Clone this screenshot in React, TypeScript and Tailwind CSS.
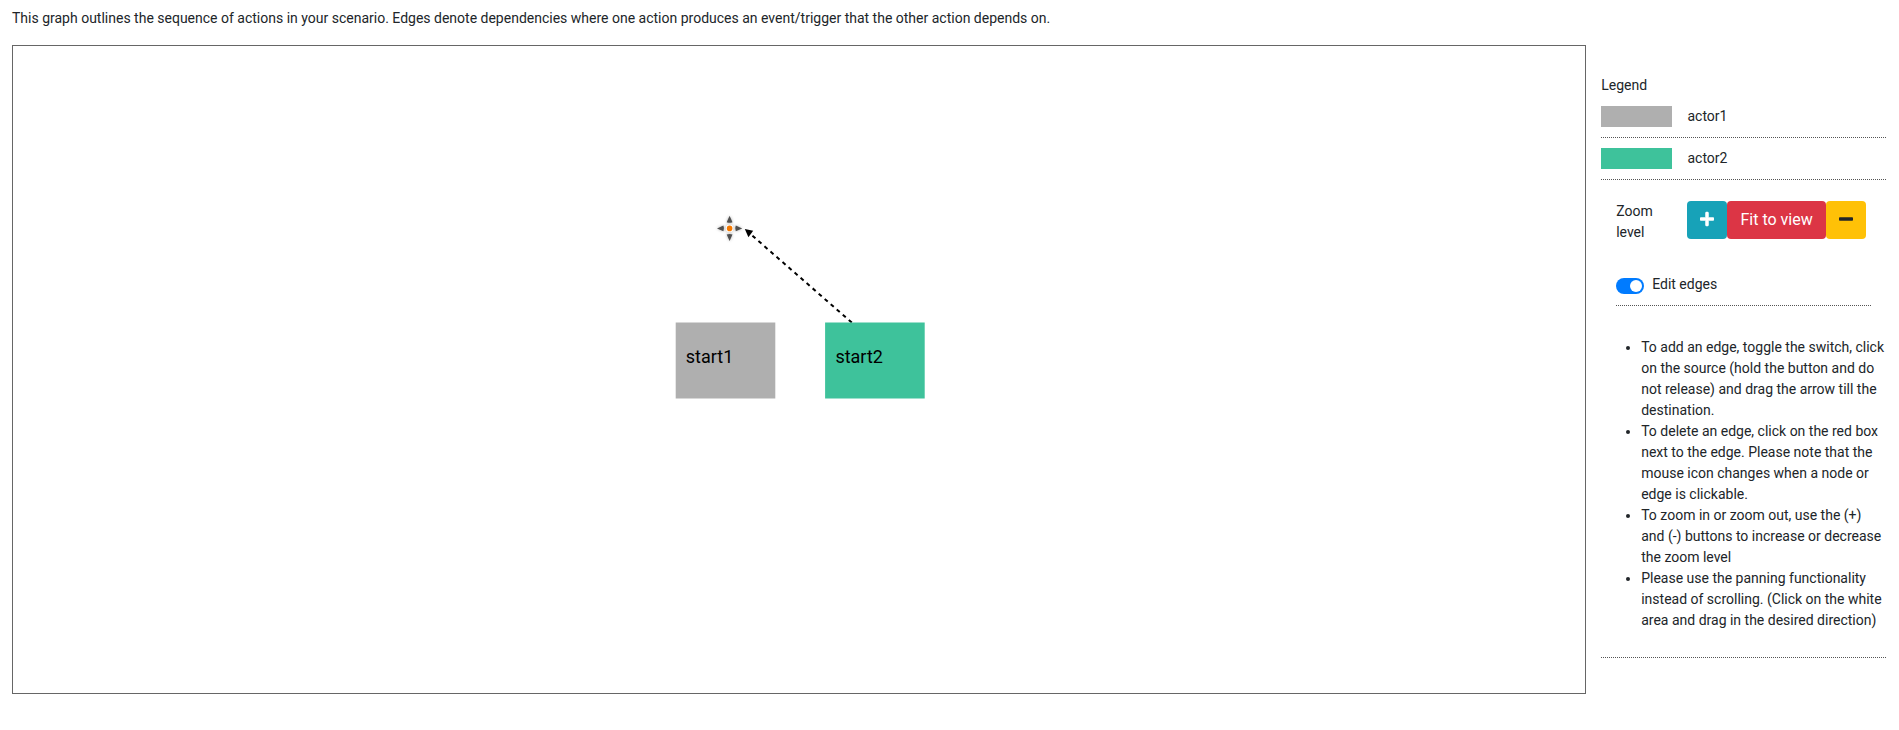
import React from "react";

const actors = [
  { name: "actor1", swatch: "bg-[#afafaf]" },
  { name: "actor2", swatch: "bg-[#3ec29b]" },
];

const hints = [
  "To add an edge, toggle the switch, click on the source (hold the button and do not release) and drag the arrow till the destination.",
  "To delete an edge, click on the red box next to the edge. Please note that the mouse icon changes when a node or edge is clickable.",
  "To zoom in or zoom out, use the (+) and (-) buttons to increase or decrease the zoom level",
  "Please use the panning functionality instead of scrolling. (Click on the white area and drag in the desired direction)",
];

function Plus() {
  return (
    <svg className="mb-0.5 h-4 w-3.5" viewBox="0 0 448 512" fill="currentColor" stroke="currentColor" strokeWidth="16">
      <path d="M416 208H272V64c0-17.67-14.33-32-32-32h-32c-17.67 0-32 14.33-32 32v144H32c-17.67 0-32 14.33-32 32v32c0 17.67 14.33 32 32 32h144v144c0 17.67 14.33 32 32 32h32c17.67 0 32-14.33 32-32V304h144c17.67 0 32-14.33 32-32v-32c0-17.67-14.33-32-32-32z" />
    </svg>
  );
}

function Minus() {
  return (
    <svg className="mb-0.5 h-4 w-3.5" viewBox="0 0 448 512" fill="currentColor" stroke="currentColor" strokeWidth="16">
      <path d="M416 208H32c-17.67 0-32 14.33-32 32v32c0 17.67 14.33 32 32 32h384c17.67 0 32-14.33 32-32v-32c0-17.67-14.33-32-32-32z" />
    </svg>
  );
}

function Graph() {
  return (
    <svg className="block h-full w-full" viewBox="13 46 1572 647" fontFamily="Roboto, sans-serif" fontSize="18">
      <path d="M851.8 322.6 750 233.6" fill="none" stroke="#000" strokeWidth="2" strokeDasharray="4 4" />
      <path d="M744.8 229 753.2 230.8 748.4 237.2Z" fill="#000" />
      <rect x="675.7" y="322.5" width="99.6" height="76" fill="#afafaf" />
      <rect x="825.1" y="322.5" width="99.6" height="76" fill="#3ec29b" />
      <text x="685.8" y="363">start1</text>
      <text x="835.4" y="363">start2</text>
      <g className="drop-shadow-[0_0.5px_1.5px_rgba(0,0,0,0.3)]" fill="#505050">
        <circle cx="729.6" cy="228.4" r="3.8" fill="#fff" />
        <circle cx="729.6" cy="228.4" r="2.8" fill="#f57900" />
        <path d="M729.6 215.8 732.5 222.2Q729.6 223.5 726.7 222.2Z" />
        <path d="M729.6 241 732.5 234.6Q729.6 233.3 726.7 234.6Z" />
        <path d="M717 228.4 723.4 225.5Q724.7 228.4 723.4 231.3Z" />
        <path d="M742.2 228.4 735.8 225.5Q734.5 228.4 735.8 231.3Z" />
      </g>
    </svg>
  );
}

export default function App() {
  return (
    <div className="h-[730px] bg-white pt-2 pl-3 font-[Roboto,sans-serif] text-sm leading-[21px] text-[#212529]">
      <p>
        This graph outlines the sequence of actions in your scenario. Edges denote dependencies where one action produces
        an event/trigger that the other action depends on.
      </p>
      <div className="mt-4 flex items-start">
        <div className="h-[649px] w-[1574px] shrink-0 border border-[#666]">
          <Graph />
        </div>
        <aside className="ml-[15.2px] w-[285px] shrink-0 pt-[30px]">
          <h2>Legend</h2>
          <ul className="mt-2.5">
            {actors.map((actor) => (
              <li key={actor.name} className="mb-2.5 flex border-b border-dotted border-[#555] pb-2.5">
                <span className={`h-[21px] w-[71.25px] ${actor.swatch}`} />
                <span className="pl-[15px]">{actor.name}</span>
              </li>
            ))}
          </ul>
          <div className="mt-[21px] flex pl-[15px]">
            <span className="w-[71.25px] pr-[15px]">Zoom level</span>
            <div className="flex text-base leading-6">
              <button className="flex h-[38px] w-10 items-center justify-center rounded bg-[#17a2b8] text-white">
                <Plus />
              </button>
              <button className="h-[38px] rounded bg-[#dc3545] px-[13px] text-white">Fit to view</button>
              <button className="flex h-[38px] w-10 items-center justify-center rounded bg-[#ffc107] text-[#212529]">
                <Minus />
              </button>
            </div>
          </div>
          <div className="mx-[15px] mt-[31px] flex border-b border-dotted border-[#555] pb-2.5">
            <span className="mt-1 flex h-4 w-7 items-center justify-end rounded-full bg-[#007bff] pr-0.5">
              <span className="size-3 rounded-full bg-white" />
            </span>
            <span className="ml-2">Edit edges</span>
          </div>
          <div className="mt-[31px] border-b border-dotted border-[#555] pb-[26px] pl-10">
            <ul className="list-disc">
              {hints.map((hint) => (
                <li key={hint}>{hint}</li>
              ))}
            </ul>
          </div>
        </aside>
      </div>
    </div>
  );
}
